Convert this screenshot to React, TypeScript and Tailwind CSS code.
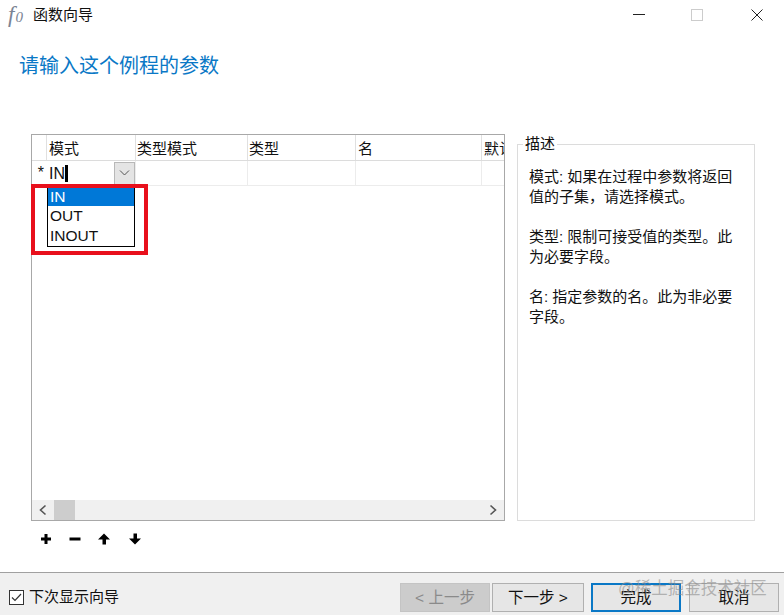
const cjk = "font-['Liberation_Sans','Noto_Sans_CJK_SC',sans-serif]";

function HeaderCell({ w, label, pad }: { w: string; label: string; pad: string }) {
  return <div className={`${w} ${pad} h-full border-r border-[#e0e0e0] pt-[3px] overflow-hidden whitespace-nowrap`}>{label}</div>;
}

function Chevron({ dir }: { dir: "l" | "r" }) {
  return (
    <svg width="10" height="12" viewBox="0 0 10 12" fill="none" stroke="#555" strokeWidth="1.6">
      <path d={dir === "l" ? "M7.5 1.5 L2.5 6 L7.5 10.5" : "M2.5 1.5 L7.5 6 L2.5 10.5"} />
    </svg>
  );
}

function Tool({ d }: { d: string }) {
  return (
    <svg width="12" height="12" viewBox="0 0 12 12" fill="#000"><path d={d} /></svg>
  );
}

function Btn({ label, cls }: { label: string; cls: string }) {
  return <div className={`h-[29px] flex items-center justify-center text-[15.5px] pt-[1px] ${cls}`}>{label}</div>;
}

export default function App() {
  return (
    <div className={`${cjk} relative w-[784px] h-[615px] bg-white text-[#111] flex flex-col overflow-hidden`}>
      {/* title bar */}
      <div className="h-[29px] flex items-center pl-[8px]">
        <div className="w-[25px] flex items-end font-['Liberation_Serif',serif] italic leading-none text-[#7b8494]">
          <span className="text-[23px] leading-none">f</span>
          <span className="text-[15px] leading-[18px] ml-[1px]">0</span>
        </div>
        <div className="text-[15px] leading-none text-[#111]">函数向导</div>
        <div className="ml-auto flex items-center">
          <div className="w-[12px] h-px bg-[#222] mr-[46px]" />
          <div className="w-[12px] h-[12px] border border-[#ccc] mr-[48px]" />
          <svg width="12" height="12" viewBox="0 0 12 12" stroke="#222" strokeWidth="1" className="mr-[21px]">
            <path d="M0.5 0.5 L11.5 11.5 M11.5 0.5 L0.5 11.5" />
          </svg>
        </div>
      </div>

      {/* heading */}
      <div className="pl-[19px] pt-[24px] h-[105px] text-[20px] leading-[26px] text-[#0a78c6]">请输入这个例程的参数</div>

      {/* main */}
      <div className="flex pl-[31px] items-start">
        <div className="w-[474px] h-[387px] border border-[#a8a8a8] flex flex-col text-[15px]">
          <div className="h-[26px] flex border-b border-[#dcdcdc] shrink-0 leading-[22px]">
            <div className="w-[15px] border-r border-[#e0e0e0]" />
            <HeaderCell w="w-[89px]" pad="pl-[2px]" label="模式" />
            <HeaderCell w="w-[112px]" pad="pl-[1px]" label="类型模式" />
            <HeaderCell w="w-[108px]" pad="pl-[1px]" label="类型" />
            <HeaderCell w="w-[126px]" pad="pl-[2px]" label="名" />
            <div className="flex-1 pl-[2px] pt-[3px] overflow-hidden whitespace-nowrap">默认</div>
          </div>
          <div className="h-[25px] flex border-b border-[#ececec] shrink-0 text-[16px]">
            <div className="w-[15px] flex justify-end pr-[3px] pt-[2px] text-[16px] leading-[20px]">*</div>
            <div className="w-[89px] border-r border-[#ececec] flex items-center justify-between pl-[2px]">
              <div className="flex items-center leading-none pt-[1px]">IN<span className="w-[3px] h-[17px] bg-black" /></div>
              <div className="w-[21px] h-[23px] bg-[#e4e4e4] border border-[#b8b8b8] flex items-center justify-center">
                <svg width="11" height="6" viewBox="0 0 11 6" fill="none" stroke="#555"><path d="M1 0.5 L5.5 5 L10 0.5" /></svg>
              </div>
            </div>
            <div className="w-[112px] border-r border-[#ececec]" />
            <div className="w-[108px] border-r border-[#ececec]" />
            <div className="w-[126px] border-r border-[#ececec]" />
          </div>
          <div className="flex-1" />
          <div className="h-[20px] bg-[#f0f0f0] flex items-center justify-between shrink-0">
            <div className="flex items-center h-full">
              <div className="w-[22px] flex justify-center"><Chevron dir="l" /></div>
              <div className="w-[21px] h-full bg-[#cdcdcd]" />
            </div>
            <div className="w-[22px] flex justify-center"><Chevron dir="r" /></div>
          </div>
        </div>

        {/* description */}
        <div className="ml-[12px] mt-[10px] w-[238px] h-[377px] border border-[#dcdcdc] relative text-[15px] leading-[20px] pl-[11px] pr-[14px] pt-[22px]">
          <div className="absolute left-[5px] top-[-10px] bg-white px-[2px] leading-[18px]">描述</div>
          <p>模式: 如果在过程中参数将返回值的子集，请选择模式。</p>
          <p className="mt-[20px]">类型: 限制可接受值的类型。此为必要字段。</p>
          <p className="mt-[20px]">名: 指定参数的名。此为非必要字段。</p>
        </div>
      </div>

      {/* toolbar */}
      <div className="h-[51px] flex items-center pl-[40px] pb-[16px]">
        <div className="w-[29px]"><Tool d="M4.5 1h3v3.5h3.5v3h-3.5v3.5h-3v-3.5h-3.5v-3h3.5z" /></div>
        <div className="w-[29px]"><Tool d="M0.5 4.5h11v3h-11z" /></div>
        <div className="w-[31px]"><Tool d="M6 0.5 L12 6.5 L8 6.5 L8 11.5 L4.5 11.5 L4.5 6.5 L0 6.5 Z" /></div>
        <div><Tool d="M6 11.5 L12 5.5 L8 5.5 L8 0.5 L4.5 0.5 L4.5 5.5 L0 5.5 Z" /></div>
      </div>

      {/* footer */}
      <div className="flex-1 bg-[#f0f0f0] border-t border-[#a0a0a0] flex items-center pl-[9px] pt-[6px]">
        <div className="w-[15px] h-[15px] border border-[#333] bg-white flex items-center justify-center mr-[5px]">
          <svg width="11" height="9" viewBox="0 0 11 9" fill="none" stroke="#333" strokeWidth="1.2"><path d="M1 4.5 L4 7.5 L10 1" /></svg>
        </div>
        <div className="text-[15px]">下次显示向导</div>
        <div className="ml-auto flex items-center pr-[5px]">
          <Btn label="< 上一步" cls="w-[90px] bg-[#cccccc] text-[#8a8a8a] border border-[#c4c4c4]" />
          <Btn label="下一步 >" cls="w-[92px] ml-[2px] bg-[#e6e6e6] border border-[#b0b0b0]" />
          <Btn label="完成" cls="w-[90px] ml-[7px] bg-[#e6e6e6] border-2 border-[#0a78c6]" />
          <Btn label="取消" cls="w-[90px] ml-[8px] bg-[#e6e6e6] border border-[#b0b0b0]" />
        </div>
      </div>

      {/* combo dropdown */}
      <div className="absolute left-[47px] top-[187px] w-[88px] h-[60px] bg-white border border-black text-[15.5px] leading-[20px] flex flex-col">
        <div className="bg-[#0078d7] text-white pl-[2px] h-[19px] leading-[18px]">IN</div>
        <div className="pl-[2px]">OUT</div>
        <div className="pl-[2px]">INOUT</div>
      </div>

      {/* red annotation */}
      <div className="absolute left-[31px] top-[184px] w-[117px] h-[71px] border-[4px] border-[#e8101c] pointer-events-none" />

      {/* watermark */}
      <div className="absolute left-[618px] top-[578px] text-[16.5px] leading-[20px] text-[#8c8c8c]/60 whitespace-nowrap">@稀土掘金技术社区</div>
    </div>
  );
}
